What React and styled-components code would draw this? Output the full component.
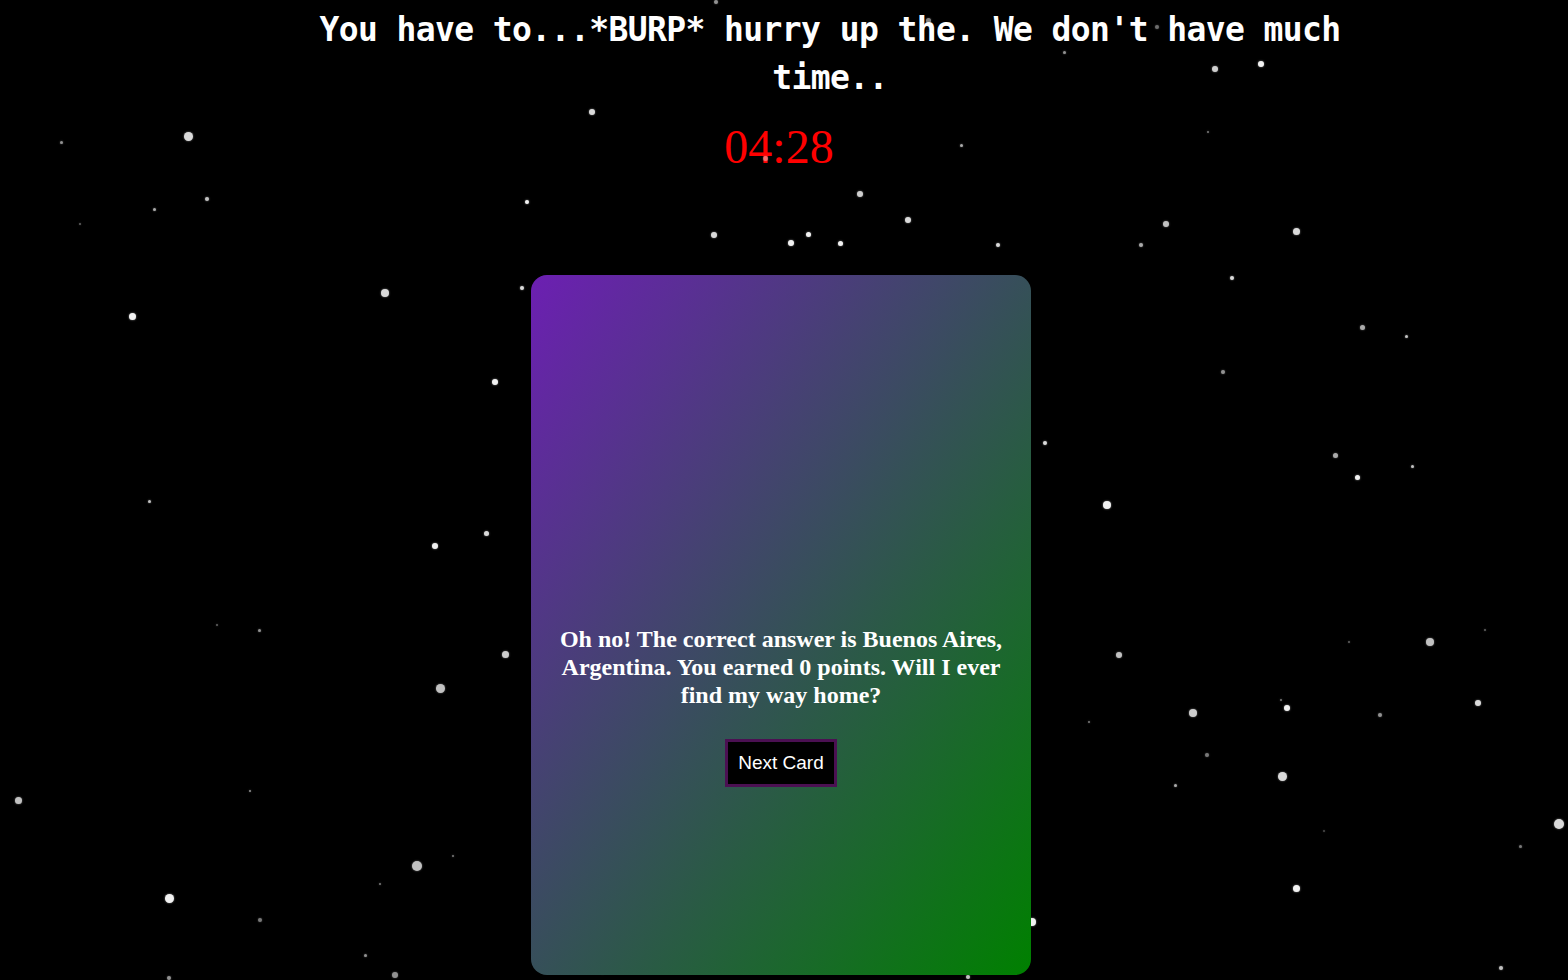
import React from 'react';
import styled, { createGlobalStyle } from 'styled-components';

const GlobalStyle = createGlobalStyle`
  html, body {
    margin: 0;
    padding: 0;
    background: #000;
    overflow: hidden;
  }
  #root {
    min-height: 980px;
  }
`;

const Page = styled.div`
  position: relative;
  min-height: 980px;
  display: flex;
  flex-direction: column;
  align-items: center;
  background: #000;
`;

const Sky = styled.div`
  position: absolute;
  inset: 0;
  z-index: 1;
  pointer-events: none;
`;

const Star = styled.span`
  position: absolute;
  border-radius: 50%;
  background: #f2f2f2;
  box-shadow: 0 0 2px rgba(255, 255, 255, 0.6);
`;

const Heading = styled.h1`
  position: relative;
  z-index: 0;
  max-width: 1100px;
  margin: 6px 0 0 92px;
  font-family: "DejaVu Sans Mono", "Liberation Mono", monospace;
  font-weight: bold;
  font-size: 33px;
  letter-spacing: -0.6px;
  line-height: 48px;
  color: #fff;
  text-align: center;
`;

const Timer = styled.div`
  position: relative;
  z-index: 0;
  margin: 17px 0 0 -10px;
  font-family: "Liberation Serif", "Times New Roman", serif;
  font-size: 48px;
  line-height: 55px;
  color: #ff0000;
`;

const Card = styled.div`
  position: relative;
  z-index: 2;
  box-sizing: border-box;
  width: 500px;
  height: 700px;
  margin: 101px 0 0 -6px;
  padding: 162px 20px 0;
  border-radius: 16px;
  background: linear-gradient(to bottom right, #6c1fb2, #008000);
  display: flex;
  flex-direction: column;
  align-items: center;
  justify-content: center;
`;

const Message = styled.h2`
  margin: 0;
  font-family: "Liberation Serif", "Times New Roman", serif;
  font-weight: bold;
  font-size: 24px;
  line-height: 28px;
  color: #fff;
  text-align: center;
`;

const NextButton = styled.button`
  margin-top: 30px;
  padding: 10px 10px;
  background: #000;
  color: #fff;
  border: 3px solid #4b1052;
  font-family: "Liberation Sans", Arial, sans-serif;
  font-size: 19px;
  line-height: 22px;
  cursor: pointer;
`;

const stars = [
  [716, 2, 4, 0.6], [592, 112, 6, 0.9], [188, 136, 9, 0.9], [61, 142, 3, 0.6],
  [207, 199, 4, 0.8], [154, 209, 3, 0.7], [527, 202, 4, 1], [860, 194, 6, 0.85],
  [908, 220, 6, 0.9], [714, 235, 6, 0.9], [791, 243, 6, 1], [808, 234, 5, 1],
  [840, 243, 5, 1], [998, 245, 4, 0.9], [1141, 245, 4, 0.7], [1166, 224, 6, 0.8],
  [1296, 231, 7, 0.9], [1215, 69, 6, 0.85], [1261, 64, 6, 1], [1064, 52, 3, 0.6],
  [961, 145, 3, 0.7], [1208, 132, 2, 0.5], [1232, 278, 4, 0.9], [385, 293, 8, 0.9],
  [522, 288, 4, 0.9], [132, 316, 7, 1], [1362, 327, 5, 0.7], [1406, 336, 3, 0.8],
  [1223, 372, 4, 0.6], [495, 382, 6, 1], [1045, 443, 4, 0.9], [1335, 455, 5, 0.7],
  [1357, 477, 5, 1], [1412, 466, 3, 0.8], [149, 501, 3, 0.8], [1107, 505, 8, 1],
  [486, 533, 5, 0.9], [435, 546, 6, 1], [259, 630, 3, 0.6], [505, 654, 7, 0.85],
  [1119, 655, 6, 0.8], [1430, 642, 8, 0.8], [1349, 642, 2, 0.4], [440, 688, 9, 0.8],
  [1193, 713, 8, 0.85], [1287, 708, 6, 1], [1281, 700, 2, 0.5], [1380, 715, 4, 0.6],
  [1478, 703, 6, 0.9], [1089, 722, 2, 0.5], [1207, 755, 4, 0.5], [1282, 776, 9, 0.9],
  [1175, 785, 3, 0.7], [250, 791, 2, 0.6], [18, 800, 7, 0.8], [417, 866, 10, 0.8],
  [453, 856, 2, 0.5], [380, 884, 2, 0.5], [1559, 824, 10, 0.9], [1520, 846, 3, 0.5],
  [1296, 888, 7, 1], [169, 898, 9, 1], [1324, 831, 2, 0.3], [260, 920, 4, 0.5],
  [1032, 922, 8, 1], [365, 955, 3, 0.6], [395, 975, 6, 0.6], [169, 978, 4, 0.6],
  [602, 972, 3, 0.6], [968, 977, 4, 0.8], [1501, 968, 4, 0.8], [80, 224, 2, 0.4],
  [1485, 630, 2, 0.4], [217, 625, 2, 0.4], [928, 20, 5, 0.55], [765, 158, 5, 0.45],
  [1157, 27, 4, 0.45],
];

export default function App() {
  return (
    <>
      <GlobalStyle />
      <Page>
        <Sky>
          {stars.map(([x, y, s, o], i) => (
            <Star
              key={i}
              style={{ left: x - s / 2, top: y - s / 2, width: s, height: s, opacity: o }}
            />
          ))}
        </Sky>
        <Heading>You have to...*BURP* hurry up the. We don't have much time..</Heading>
        <Timer>04:28</Timer>
        <Card>
          <Message>
            Oh no! The correct answer is Buenos Aires, Argentina. You earned 0 points. Will I ever find my way home?
          </Message>
          <NextButton>Next Card</NextButton>
        </Card>
      </Page>
    </>
  );
}
